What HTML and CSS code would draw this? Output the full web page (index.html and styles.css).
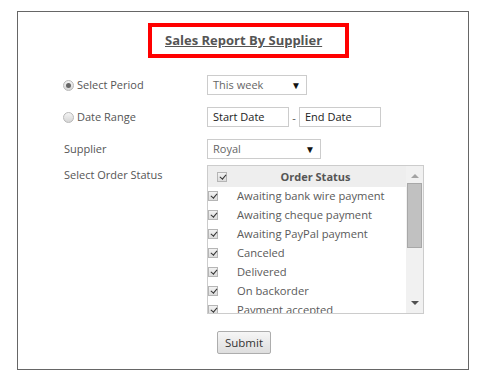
FILE: index.html
```html
<!DOCTYPE html>
<html>
<head>
<meta charset="utf-8">
<link rel="stylesheet" href="styles.css">
</head>
<body>
<div class="panel">
  <div class="title-wrap">
    <h1 class="title">Sales Report By Supplier</h1>
  </div>
  <div class="form">
    <div class="row row-period">
      <label class="lbl"><span class="radio checked"></span>Select Period</label>
      <div class="select sel-period"><span>This week</span><span class="caret">▼</span></div>
    </div>
    <div class="row row-range">
      <label class="lbl"><span class="radio"></span>Date Range</label>
      <div class="dates">
        <div class="input in-start">Start Date</div>
        <span class="dash">-</span>
        <div class="input in-end">End Date</div>
      </div>
    </div>
    <div class="row row-supplier">
      <label class="lbl plain">Supplier</label>
      <div class="select sel-supplier"><span>Royal</span><span class="caret">▼</span></div>
    </div>
    <div class="row row-status">
      <label class="lbl plain">Select Order Status</label>
      <div class="listbox">
        <div class="list">
          <div class="list-head"><span class="cb"></span><span class="head-text">Order Status</span></div>
          <div class="item"><span class="cb"></span><span class="item-text">Awaiting bank wire payment</span></div>
          <div class="item"><span class="cb"></span><span class="item-text">Awaiting cheque payment</span></div>
          <div class="item"><span class="cb"></span><span class="item-text">Awaiting PayPal payment</span></div>
          <div class="item"><span class="cb"></span><span class="item-text">Canceled</span></div>
          <div class="item"><span class="cb"></span><span class="item-text">Delivered</span></div>
          <div class="item"><span class="cb"></span><span class="item-text">On backorder</span></div>
          <div class="item"><span class="cb"></span><span class="item-text">Payment accepted</span></div>
        </div>
        <div class="scrollbar">
          <span class="arrow up"></span>
          <div class="track"><div class="thumb"></div></div>
          <span class="arrow down"></span>
        </div>
      </div>
    </div>
    <div class="actions">
      <button class="btn">Submit</button>
    </div>
  </div>
</div>
</body>
</html>
```
FILE: styles.css
```css
* { box-sizing: border-box; }
html, body { margin: 0; padding: 0; background: #fff; }
body {
  font-family: "Open Sans", "Liberation Sans", sans-serif;
  color: #555;
  font-size: 11px;
  padding: 11px 15px 0 17px;
}
.panel {
  width: 452px;
  height: 359px;
  border: 1px solid #666;
  padding-top: 11px;
}
.title-wrap {
  display: flex;
  justify-content: center;
}
.title {
  margin: 0 0 0 11px;
  width: 201px;
  height: 35px;
  border: 4px solid #f00;
  font-size: 13px;
  font-weight: bold;
  color: #555;
  text-decoration: underline;
  text-align: left;
  padding-left: 13px;
  line-height: 26px;
}
.form {
  padding-left: 44px;
  padding-top: 17px;
}
.row {
  display: flex;
  align-items: flex-start;
}
.lbl {
  width: 145px;
  display: flex;
  align-items: center;
  font-size: 11px;
  line-height: 20px;
}
.lbl.plain { padding-left: 2px; }
.radio {
  width: 11px;
  height: 11px;
  border-radius: 50%;
  border: 1px solid #b8b8b8;
  background: linear-gradient(#f4f4f4, #d6d6d6);
  margin-right: 3px;
  margin-left: 1px;
  display: inline-flex;
  align-items: center;
  justify-content: center;
}
.radio.checked::after {
  content: "";
  width: 5px;
  height: 5px;
  border-radius: 50%;
  background: #666;
}
.select, .input {
  border: 1px solid #ccc;
  height: 20px;
  font-size: 11px;
  line-height: 18px;
  padding: 0 5px 0 5px;
  display: flex;
  justify-content: space-between;
  color: #666;
}
.input { color: #222; }
.caret { font-size: 10px; color: #111; }
.sel-period { width: 100px; }
.sel-supplier { width: 114px; }
.row-range { margin-top: 12px; }
.row-supplier { margin-top: 12px; }
.row-status { margin-top: 6px; }
.dates { display: flex; align-items: center; }
.in-start { width: 82px; }
.in-end { width: 82px; }
.dash { width: 10px; text-align: center; }
.listbox {
  width: 217px;
  height: 149px;
  border: 1px solid #ccc;
  display: flex;
  overflow: hidden;
}
.list { flex: 1; overflow: hidden; }
.list-head {
  background: #eee;
  height: 21px;
  display: flex;
  align-items: center;
  padding-left: 9px;
}
.head-text {
  flex: 1;
  text-align: center;
  font-weight: bold;
  font-size: 11px;
  padding-right: 2px;
}
.item {
  height: 19px;
  display: flex;
  align-items: center;
  padding-left: 0;
}
.list-head + .item { margin-top: -1px; }
.item-text { margin-left: 19px; font-size: 11.2px; color: #5a5a5a; }
.cb {
  width: 10px;
  height: 10px;
  border: 1px solid #b5b5b5;
  background: linear-gradient(#f2f2f2, #dcdcdc);
  position: relative;
  flex: none;
}
.cb::after {
  content: "";
  position: absolute;
  left: 2.5px;
  top: 0px;
  width: 2.5px;
  height: 5px;
  border-right: 1.6px solid #333;
  border-bottom: 1.6px solid #333;
  transform: rotate(40deg);
}
.scrollbar {
  width: 17px;
  background: #f1f1f1;
  display: flex;
  flex-direction: column;
  align-items: center;
}
.arrow { width: 0; height: 0; border-left: 4px solid transparent; border-right: 4px solid transparent; }
.arrow.up { border-bottom: 4px solid #a3a3a3; margin-top: 8px; }
.arrow.down { border-top: 4px solid #505050; margin-bottom: 8px; }
.track { flex: 1; width: 100%; padding: 5px 1px; }
.thumb { height: 65px; background: #c1c1c1; border: 1px solid #a8a8a8; }
.actions { padding-left: 155px; padding-top: 17px; }
.btn {
  font-family: "Open Sans", "Liberation Sans", sans-serif;
  font-size: 11.5px;
  color: #333;
  width: 54px;
  height: 23px;
  border: 1px solid #adadad;
  border-radius: 2px;
  background: linear-gradient(#f6f6f6, #dedede);
  padding: 0;
}
```
